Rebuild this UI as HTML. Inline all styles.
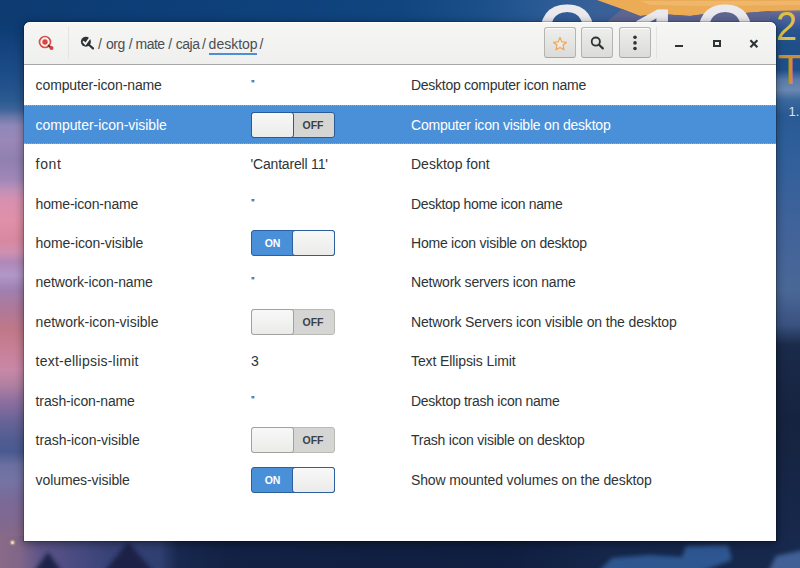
<!DOCTYPE html>
<html lang="en">
<head>
<meta charset="utf-8">
<title>dconf Editor</title>
<style>
html,body{margin:0;padding:0;}
body{width:800px;height:568px;overflow:hidden;position:relative;background:#12203f;font-family:"Liberation Sans",sans-serif;font-size:14px;color:#2e3436;}
.abs{position:absolute;}
/* wallpaper strips */
#bg-top{left:0;top:0;width:800px;height:30px;background:linear-gradient(90deg,#0d3b72 0px,#0e3f78 200px,#10457f 400px,#1a4f8a 480px,#2a5a94 540px,#3a6098 600px);}
#bg-left{left:0;top:20px;width:30px;height:548px;background:linear-gradient(180deg,#0d3b72 0px,#0e3d75 10px,#184884 40px,#1f4f8a 60px,#2a5a90 80px,#3f659c 90px,#6a78a8 97px,#9088b8 106px,#9a88b8 120px,#9080b0 140px,#a088b8 160px,#c090b8 170px,#d890b0 180px,#e090a8 200px,#d888a0 220px,#d090b0 232px,#b088b8 242px,#b098c8 255px,#a080b0 270px,#b07898 290px,#c07888 310px,#c88098 330px,#c888a8 350px,#b080a0 365px,#9070a0 380px,#6a6498 400px,#505c90 420px,#4a5a90 432px,#6a70a0 445px,#7474a4 460px,#7a6a98 480px,#806890 500px,#886a88 520px,#8a6880 548px);}
#bg-right{left:770px;top:0;width:30px;height:568px;background:linear-gradient(180deg,#e8a850 0px,#f0bc78 3px,#e8a850 8px,#b08878 10px,#6a6890 12px,#46609a 20px,#2a548e 30px,#1f4f88 45px,#1f508c 70px,#5a7cac 80px,#6a88b0 90px,#3a689e 100px,#2a5a94 115px,#2f5f9a 150px,#41639a 230px,#4a6896 290px,#3a5280 325px,#1a2a4a 345px,#16233f 420px,#17284c 536px,#18294e 568px);}
#bg-bottom{left:0;top:536px;width:800px;height:32px;background:linear-gradient(90deg,#8a6a88 0px,#806688 20px,#5e5488 40px,#474a80 80px,#384276 110px,#2f3f70 160px,#18284e 178px,#122144 230px,#101e40 500px,#14264a 600px,#16284c 760px,#18294e 800px);}
/* window */
#win{left:24px;top:22px;width:752px;height:519px;background:#fff;border-radius:6px 6px 0 0;box-shadow:0 0 0 1px rgba(0,0,0,.18),0 2px 9px 1px rgba(0,0,0,.38);overflow:hidden;}
#hdr{left:0;top:0;width:752px;height:42px;background:linear-gradient(180deg,#f6f6f5,#efefee);border-bottom:1px solid #a8a8a6;border-radius:6px 6px 0 0;box-shadow:inset 0 1px #fff;}
.sep{width:1px;background:#e4e4e2;top:5px;height:32px;}
.btn{top:5px;height:29px;width:30px;border:1px solid #b4b4b0;border-radius:3px;background:linear-gradient(180deg,#eeeeec,#dbdbd9);border-bottom-color:#a6a6a2;box-shadow:inset 0 1px rgba(255,255,255,.8);}
.path{top:13px;height:18px;line-height:18px;color:#4a4e50;white-space:nowrap;}
/* list */
.row{left:0;width:752px;height:39.45px;}
.row .k,.row .v,.row .d{position:absolute;top:var(--t);height:39.46px;line-height:39px;white-space:nowrap;}
.row .k{left:11.6px;}
.row .v{left:227px;}
.row .q{font-size:11.5px;letter-spacing:-0.7px;top:calc(var(--t) - 1.3px);color:#3c4042;}
.row .d{left:387px;}
.row.sel{background:#4a90d9;color:#fff;box-shadow:inset 0 1px 0 rgba(255,255,255,.0);}
.row.sel:before{content:"";position:absolute;left:0;right:0;top:0;bottom:0;border-top:1px dotted rgba(255,255,255,.28);border-bottom:1px dotted rgba(255,255,255,.28);}
.sw{position:absolute;left:227px;top:6.7px;width:82px;height:24px;border:1px solid #b9b9b6;border-radius:3px;background:#d5d5d3;font-weight:bold;font-size:10.5px;line-height:24px;color:#3c4143;}
.sw i{position:absolute;top:-1px;width:41px;height:24px;border:1px solid #a1a19d;border-radius:3px;background:linear-gradient(180deg,#f8f8f8,#ebebea);}
.sw.off i{left:-1px;}
.sw.off b{position:absolute;left:41px;width:40px;text-align:center;}
.sw.on{background:#4a90d9;border-color:#2b5f9e;color:#fff;}
.sw.on i{right:-1px;border-color:#2b5f9e;}
.sw.on b{position:absolute;left:0;width:41px;text-align:center;}
.row.sel .sw{border-color:#2a5b97;}
.row.sel .sw i{border-color:#2a5b97;}
</style>
</head>
<body>
<div id="bg-top" class="abs"></div>
<div id="bg-left" class="abs"></div>
<div id="bg-right" class="abs"></div>
<div id="bg-bottom" class="abs"></div>
<svg class="abs" style="left:0;top:0" width="800" height="568" viewBox="0 0 800 568">
  <!-- clouds + mountains -->
  <path d="M597 0 L800 0 L800 10 L770 11 L745 13 L720 12 L690 16 L660 14 L640 16 L622 9 Z" fill="#ecab55"/>
  <path d="M640 1 L800 1 L800 5 L700 6 L650 5 Z" fill="#f0bc78" opacity=".7"/>
  <path d="M622 9 L640 16 L660 14 L690 16 L720 12 L745 13 L770 11 L770 24 L604 24 Z" fill="#5e6692"/>
  <!-- big year digits -->
  <text transform="translate(567,77.4) scale(1.17,1.04)" text-anchor="middle" font-family="Liberation Sans, sans-serif" font-size="100" fill="#e9e9ee">0</text>
  <text transform="translate(660,80.5) scale(1.3,1.04)" text-anchor="middle" font-family="Liberation Sans, sans-serif" font-size="100" fill="#e9e9ee">1</text>
  <text transform="translate(725,77.4) scale(1.17,1.04)" text-anchor="middle" font-family="Liberation Sans, sans-serif" font-size="100" fill="#e9e9ee">0</text>
  <text x="776" y="39.6" font-family="Liberation Sans, sans-serif" font-size="40" textLength="21" lengthAdjust="spacingAndGlyphs" fill="#dfc044">2</text>
  <text x="777.5" y="84.4" font-family="Liberation Sans, sans-serif" font-size="42" fill="#d08c34">T</text>
  <text x="788.5" y="116" font-family="Liberation Sans, sans-serif" font-size="13" fill="#dbe3f2">1.</text>
  <!-- snow + trees along the bottom -->
  <defs><filter id="bl" x="-20%" y="-20%" width="140%" height="140%"><feGaussianBlur stdDeviation="2"/></filter></defs>
  <path d="M598 572 L612 558 L650 555 L682 557 L686 546 L728 545 L732 560 L700 572 Z" fill="#2d5690" filter="url(#bl)"/>
  <path d="M768 572 L776 556 L804 550 L804 572 Z" fill="#3f6096" filter="url(#bl)"/>
  <path d="M34 572 L48 552 L62 572 Z M104 572 L128 542 L154 572 Z" fill="#1a2446" filter="url(#bl)"/>
  <circle cx="12.5" cy="542.5" r="3" fill="#caa890" opacity=".5"/>
  <circle cx="12.5" cy="542.5" r="1.5" fill="#f4e0b8"/>
</svg>

<div id="win" class="abs">
  <div id="hdr" class="abs">
    <svg class="abs" style="left:12px;top:11px" width="20" height="20" viewBox="0 0 20 20">
      <circle cx="9" cy="9" r="5.5" fill="#fdf3f2" stroke="#d8504a" stroke-width="1.7"/>
      <circle cx="9" cy="9" r="2.7" fill="#d64640"/>
      <path d="M12.6 12.6 L14.6 14.4" stroke="#6a2f2c" stroke-width="2" stroke-linecap="round"/>
      <circle cx="15.5" cy="15" r="2" fill="#cf433d"/>
    </svg>
    <div class="sep abs" style="left:44px"></div>
    <svg class="abs" style="left:56px;top:14px" width="16" height="15" viewBox="0 0 16 15">
      <circle cx="5.9" cy="5.8" r="5" fill="#2e3436"/>
      <path d="M9.4 9.2 L13 12.4" stroke="#2e3436" stroke-width="2.2" stroke-linecap="round"/>
      <path d="M3.1 5.4 L5.5 8 L9.8 2" fill="none" stroke="#f4f4f3" stroke-width="1.9"/>
    </svg>
    <span class="path abs" style="left:74px">/</span>
    <span class="path abs" style="left:82px;letter-spacing:-0.5px">org</span>
    <span class="path abs" style="left:104.8px">/</span>
    <span class="path abs" style="left:111.6px;letter-spacing:-0.55px">mate</span>
    <span class="path abs" style="left:144.3px">/</span>
    <span class="path abs" style="left:151.8px;letter-spacing:-0.5px">caja</span>
    <span class="path abs" style="left:178px">/</span>
    <span class="path abs" style="left:184.6px">desktop</span>
    <span class="path abs" style="left:235.5px">/</span>
    <div class="abs" style="left:184.5px;top:30.5px;width:48px;height:2px;background:#4a90d9"></div>
    <div class="btn abs" style="left:520px">
      <svg class="abs" style="left:7px;top:8px" width="16" height="15" viewBox="0 0 16 15"><path d="M8 1.6 L9.9 5.9 L14.4 6.3 L11 9.3 L12 13.8 L8 11.4 L4 13.8 L5 9.3 L1.6 6.3 L6.1 5.9 Z" fill="#ecebe6" stroke="#f0a352" stroke-width="1.15" stroke-linejoin="round"/></svg>
    </div>
    <div class="btn abs" style="left:557px">
      <svg class="abs" style="left:7px;top:7px" width="16" height="16" viewBox="0 0 16 16"><circle cx="6.8" cy="6.6" r="4.1" fill="none" stroke="#2e3436" stroke-width="1.8"/><path d="M10 9.8 L13.8 13.4" stroke="#2e3436" stroke-width="2.2" stroke-linecap="round"/></svg>
    </div>
    <div class="btn abs" style="left:595px">
      <svg class="abs" style="left:7px;top:7px" width="16" height="16" viewBox="0 0 16 16"><circle cx="8" cy="2.2" r="1.8" fill="#2e3436"/><circle cx="8" cy="7.9" r="1.8" fill="#2e3436"/><circle cx="8" cy="13.5" r="1.8" fill="#2e3436"/></svg>
    </div>
    <div class="sep abs" style="left:632px"></div>
    <div class="abs" style="left:651px;top:23px;width:8px;height:2px;background:#2e3436"></div>
    <div class="abs" style="left:688.6px;top:17.6px;width:4px;height:3.8px;border:2px solid #2e3436"></div>
    <svg class="abs" style="left:724px;top:16px" width="12" height="12" viewBox="0 0 12 12"><path d="M2.4 2.2 L9.4 9.2 M9.4 2.2 L2.4 9.2" stroke="#2e3436" stroke-width="2.1"/></svg>
  </div>
  <div class="row abs" style="top:43.60px;--t:0.40px"><span class="k" style="letter-spacing:-0.123px">computer-icon-name</span><span class="v q">''</span><span class="d" style="letter-spacing:-0.272px">Desktop computer icon name</span></div>
  <div class="row abs sel" style="top:83.05px;--t:0.95px"><span class="k" style="letter-spacing:-0.049px">computer-icon-visible</span><span class="sw off"><i></i><b>OFF</b></span><span class="d" style="letter-spacing:-0.211px">Computer icon visible on desktop</span></div>
  <div class="row abs" style="top:122.50px;--t:0.50px"><span class="k" style="letter-spacing:0.647px">font</span><span class="v" style="letter-spacing:-0.18px;margin-left:-0.5px">'Cantarell 11'</span><span class="d" style="letter-spacing:0.009px">Desktop font</span></div>
  <div class="row abs" style="top:161.95px;--t:1.05px"><span class="k" style="letter-spacing:-0.182px">home-icon-name</span><span class="v q">''</span><span class="d" style="letter-spacing:-0.336px">Desktop home icon name</span></div>
  <div class="row abs" style="top:201.40px;--t:0.60px"><span class="k" style="letter-spacing:-0.078px">home-icon-visible</span><span class="sw on"><b>ON</b><i></i></span><span class="d" style="letter-spacing:-0.223px">Home icon visible on desktop</span></div>
  <div class="row abs" style="top:240.85px;--t:0.15px"><span class="k" style="letter-spacing:-0.110px">network-icon-name</span><span class="v q">''</span><span class="d" style="letter-spacing:-0.205px">Network servers icon name</span></div>
  <div class="row abs" style="top:280.30px;--t:0.70px"><span class="k" style="letter-spacing:-0.002px">network-icon-visible</span><span class="sw off"><i></i><b>OFF</b></span><span class="d" style="letter-spacing:-0.140px">Network Servers icon visible on the desktop</span></div>
  <div class="row abs" style="top:319.75px;--t:0.25px"><span class="k" style="letter-spacing:0.222px">text-ellipsis-limit</span><span class="v">3</span><span class="d" style="letter-spacing:-0.106px">Text Ellipsis Limit</span></div>
  <div class="row abs" style="top:359.20px;--t:0.80px"><span class="k" style="letter-spacing:-0.132px">trash-icon-name</span><span class="v q">''</span><span class="d" style="letter-spacing:-0.280px">Desktop trash icon name</span></div>
  <div class="row abs" style="top:398.65px;--t:0.35px"><span class="k" style="letter-spacing:-0.056px">trash-icon-visible</span><span class="sw off"><i></i><b>OFF</b></span><span class="d" style="letter-spacing:-0.226px">Trash icon visible on desktop</span></div>
  <div class="row abs" style="top:438.10px;--t:0.90px"><span class="k" style="letter-spacing:-0.100px">volumes-visible</span><span class="sw on"><b>ON</b><i></i></span><span class="d" style="letter-spacing:-0.131px">Show mounted volumes on the desktop</span></div>
</div>
</body>
</html>
